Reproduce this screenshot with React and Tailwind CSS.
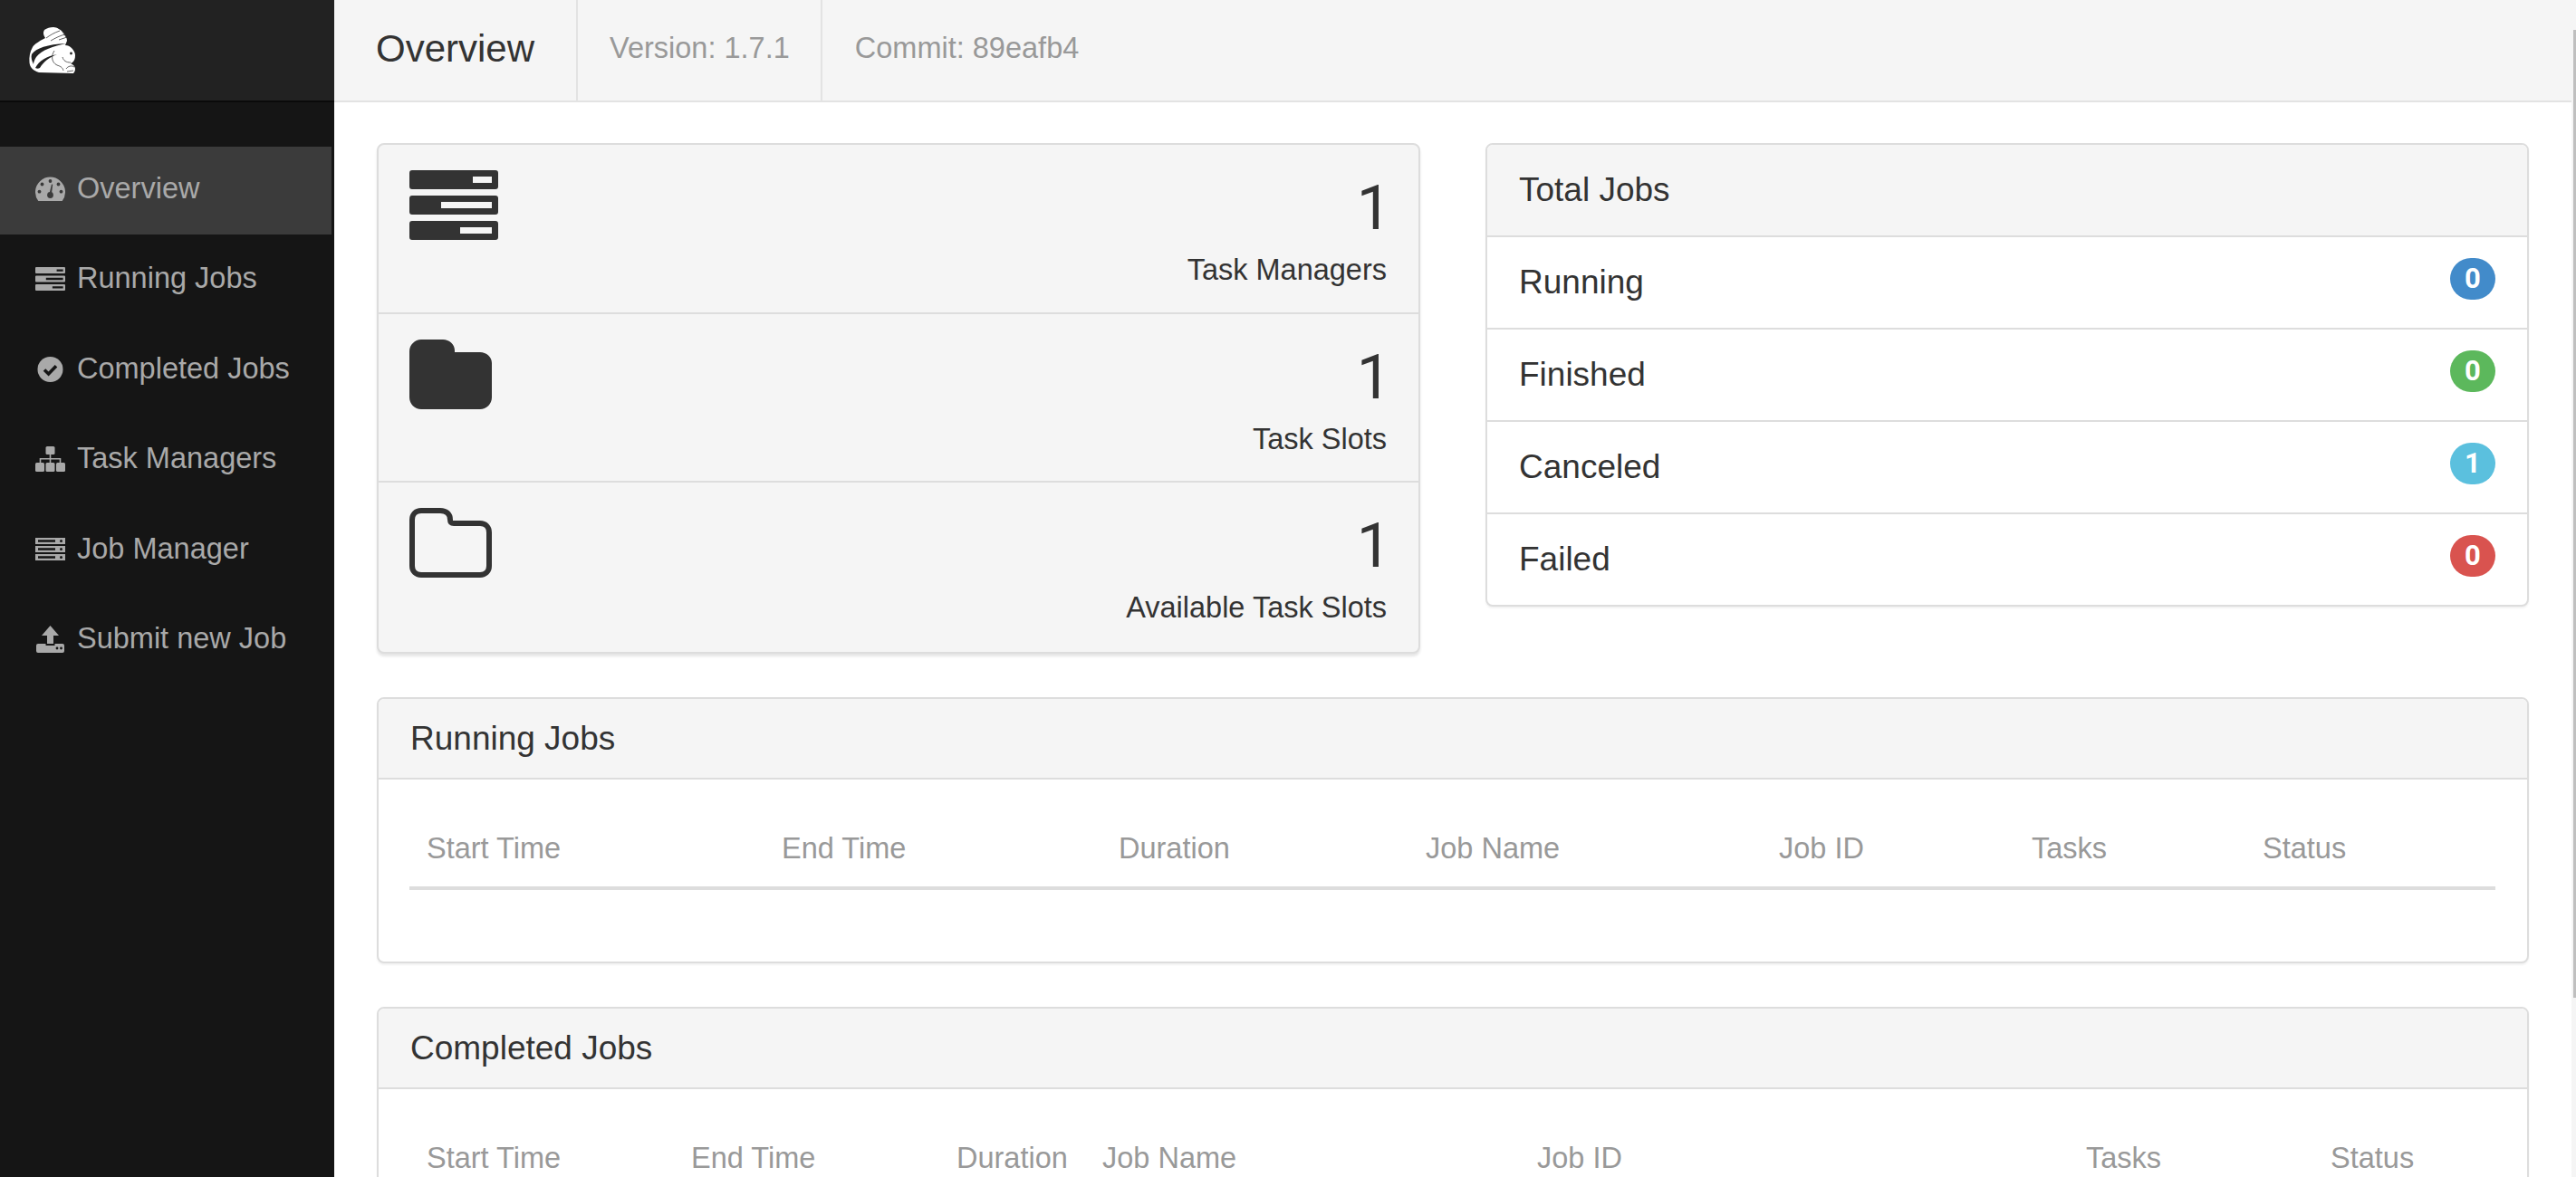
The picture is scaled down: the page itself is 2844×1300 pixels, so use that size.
import React from "react";

const font = { fontFamily: '"Liberation Sans", Arial, sans-serif' };

function TasksIcon({ className }) {
  return (
    <svg viewBox="0 0 98 77" className={className} fill="currentColor">
      <path
        fillRule="evenodd"
        d="M3 0h92a3 3 0 0 1 3 3v15a3 3 0 0 1-3 3H3a3 3 0 0 1-3-3V3a3 3 0 0 1 3-3zM70 7v7h21V7zM3 28h92a3 3 0 0 1 3 3v15a3 3 0 0 1-3 3H3a3 3 0 0 1-3-3V31a3 3 0 0 1 3-3zM35 35v7h56v-7zM3 56h92a3 3 0 0 1 3 3v15a3 3 0 0 1-3 3H3a3 3 0 0 1-3-3V59a3 3 0 0 1 3-3zM56 63v7h35v-7z"
      />
    </svg>
  );
}

function FolderClosed({ className }) {
  return (
    <svg viewBox="0 0 91 77" className={className} fill="currentColor">
      <path d="M13 0h24c7 0 13 5 13 12v2h28c7 0 13 5 13 12v38c0 7-6 13-13 13H13C6 77 0 71 0 64V13C0 6 6 0 13 0z" />
    </svg>
  );
}

function FolderOpen({ className }) {
  return (
    <svg viewBox="0 0 91 77" className={className} fill="none" stroke="currentColor" strokeWidth="6">
      <path d="M13 3h21c7 0 11 4 11 10 0 3 1 4 4 4h29c6 0 10 4 10 10v37c0 6-4 10-10 10H13C7 74 3 70 3 64V13C3 7 7 3 13 3z" />
    </svg>
  );
}

function GaugeIcon({ className }) {
  return (
    <svg viewBox="0 0 33 27" className={className}>
      <path fill="currentColor" d="M3.3 27A16.5 16.5 0 1 1 29.7 27Z" />
      <g fill="#3b3b3b">
        <circle cx="16.5" cy="5" r="1.9" />
        <circle cx="7.5" cy="8.5" r="1.9" />
        <circle cx="25.5" cy="8.5" r="1.9" />
        <circle cx="4.5" cy="16.7" r="1.9" />
        <circle cx="28.5" cy="16.7" r="1.9" />
        <circle cx="16.5" cy="20.5" r="3.4" />
        <path d="M15.2 20l2.8-11.5 1.2.3-1.4 11.5z" />
      </g>
    </svg>
  );
}

function CheckIcon({ className }) {
  return (
    <svg viewBox="0 0 29 28" className={className}>
      <circle cx="14.5" cy="14" r="14" fill="currentColor" />
      <path d="M8 14.5l4.6 4.5L21 10.2" fill="none" stroke="#151515" strokeWidth="3.6" />
    </svg>
  );
}

function SitemapIcon({ className }) {
  return (
    <svg viewBox="0 0 33 28" className={className} fill="currentColor">
      <rect x="11.5" y="0" width="10" height="9" rx="1.5" />
      <rect x="0" y="18" width="10" height="10" rx="1.5" />
      <rect x="11.5" y="18" width="10" height="10" rx="1.5" />
      <rect x="23" y="18" width="10" height="10" rx="1.5" />
      <path d="M15.7 9h1.6v4h11v5h-1.6v-3.4h-9.4V18h-1.6v-3.4H6.3V18H4.7v-5h11z" />
    </svg>
  );
}

function ServerIcon({ className }) {
  return (
    <svg viewBox="0 0 33 25" className={className} fill="currentColor">
      <path
        fillRule="evenodd"
        d="M0 0h33v7H0zM3 2.3v2.4h19V2.3zM28.5 2a1.5 1.5 0 1 0 0 3 1.5 1.5 0 0 0 0-3zM0 9h33v7H0zM3 11.3v2.4h19v-2.4zM28.5 11a1.5 1.5 0 1 0 0 3 1.5 1.5 0 0 0 0-3zM0 18h33v7H0zM3 20.3v2.4h19v-2.4zM28.5 20a1.5 1.5 0 1 0 0 3 1.5 1.5 0 0 0 0-3z"
      />
    </svg>
  );
}

function UploadIcon({ className }) {
  return (
    <svg viewBox="0 0 31 30" className={className} fill="currentColor">
      <path d="M15.5 0l9.5 11h-6v9h-7v-9H6z" />
      <path
        fillRule="evenodd"
        d="M2 20h8.5v2h10v-2H29a2 2 0 0 1 2 2v6a2 2 0 0 1-2 2H2a2 2 0 0 1-2-2v-6a2 2 0 0 1 2-2zM23 23.6a1.4 1.4 0 1 0 0 2.8 1.4 1.4 0 0 0 0-2.8zM27.5 23.6a1.4 1.4 0 1 0 0 2.8 1.4 1.4 0 0 0 0-2.8z"
      />
    </svg>
  );
}

// squirrel mark, drawn by hand
function Logo() {
  return (
    <svg viewBox="0 0 51 51" className="w-[51px] h-[51px]">
      <path
        fill="#fff"
        d="M11 50C5 48 1 45 .5 39 0 33 1 27 4 22c2-3 6-6 14-10-2-3-3-6-1-9 3-2 6-3 10-3 4 0 8 3 11 6 2 3 4 6 4 9l-2 5c3 0 5 1 7 3 2 2 4 5 4 8 0 4-1 6-3 8l-2 1c2 1 5 3 5 6 0 2-1 4-2 5z"
      />
      <g fill="#222">
        <path d="M3 30C8 23 20 19 41 18 27 21 14 25 8 33c-2 3-3 6-3 8-2-4-3-8-2-11z" />
        <path d="M7 45c4-8 13-13 24-15-8 3-15 8-19 15-2 1-3 1-5 0z" />
      </g>
      <g fill="none" stroke="#222" strokeWidth="0.7">
        <path d="M19 12c4-3 9-6 15-8" />
        <path d="M24 15c5-3 11-6 16-7" />
        <path d="M33 14l9-3" />
        <path d="M37 5l4 6" />
        <path d="M28 26c-4 6-3 13 3 16 3 1 6 2 7 6" />
        <path d="M37 33c1 4 4 6 9 6" />
        <path d="M41 46c2-3 6-4 9-2" />
        <path d="M42 49l7-1" />
      </g>
      <circle cx="46.5" cy="29" r="1.4" fill="#222" />
    </svg>
  );
}

const nav = [
  { label: "Overview", icon: GaugeIcon, size: "w-[33px] h-[27px]", active: true },
  { label: "Running Jobs", icon: TasksIcon, size: "w-[33px] h-[26px]" },
  { label: "Completed Jobs", icon: CheckIcon, size: "w-[29px] h-[28px]" },
  { label: "Task Managers", icon: SitemapIcon, size: "w-[33px] h-[28px]" },
  { label: "Job Manager", icon: ServerIcon, size: "w-[33px] h-[25px]" },
  { label: "Submit new Job", icon: UploadIcon, size: "w-[31px] h-[30px]" },
];

const stats = [
  { value: 1, label: "Task Managers", icon: TasksIcon, size: "w-[98px] h-[77px]" },
  { value: 1, label: "Task Slots", icon: FolderClosed, size: "w-[91px] h-[77px]" },
  { value: 1, label: "Available Task Slots", icon: FolderOpen, size: "w-[91px] h-[77px]" },
];

const totals = [
  { label: "Running", value: 0, color: "bg-[#428bca]" },
  { label: "Finished", value: 0, color: "bg-[#5cb85c]" },
  { label: "Canceled", value: 1, color: "bg-[#5bc0de]" },
  { label: "Failed", value: 0, color: "bg-[#d9534f]" },
];

const columns = ["Start Time", "End Time", "Duration", "Job Name", "Job ID", "Tasks", "Status"];
const runningWidths = ["w-[392px]", "w-[372px]", "w-[339px]", "w-[390px]", "w-[279px]", "w-[255px]", "w-[276px]"];
const completedWidths = ["w-[292px]", "w-[293px]", "w-[161px]", "w-[480px]", "w-[606px]", "w-[270px]", "w-[201px]"];

function Panel({ title, tall, children, className = "" }) {
  return (
    <div className={`border-2 border-[#ddd] rounded-lg bg-white shadow-[0_2px_2px_rgba(0,0,0,0.05)] overflow-hidden ${className}`}>
      <div className={`${tall ? "h-[102px]" : "h-[89px]"} bg-[#f5f5f5] border-b-2 border-[#ddd] px-[35px] flex items-center text-[37px] text-[#333]`}>
        {title}
      </div>
      {children}
    </div>
  );
}

function JobsTable({ widths }) {
  return (
    <div className="px-[34px] pt-[38px] pb-[79px]">
      <table className="table-fixed w-[2303px] border-collapse">
        <thead>
          <tr>
            {columns.map((c, i) => (
              <th
                key={c}
                className={`${widths[i]} h-[82px] pl-[19px] pb-[4px] text-left font-normal text-[32.5px] text-[#999] border-b-4 border-[#ddd]`}
              >
                {c}
              </th>
            ))}
          </tr>
        </thead>
      </table>
    </div>
  );
}

export default function App() {
  return (
    <div className="flex w-full h-[1300px] overflow-hidden bg-white" style={font}>
      {/* sidebar */}
      <aside className="w-[369px] shrink-0 bg-[#151515]">
        <div className="h-[113px] bg-[#222] border-b-2 border-[#0a0a0a] pl-[32px] pt-[30px]">
          <Logo />
        </div>
        <nav className="pt-[49px] pr-[3px]">
          {nav.map((item) => {
            const Icon = item.icon;
            return (
              <div
                key={item.label}
                className={`h-[97px] mb-[2.5px] pl-[39px] pb-[4px] flex items-center text-[32.5px] text-[#a9a9a9] ${item.active ? "bg-[#3b3b3b]" : ""}`}
              >
                <span className="w-[33px] mr-[13px] flex justify-center">
                  <Icon className={item.size} />
                </span>
                <span className="mb-[1px]">{item.label}</span>
              </div>
            );
          })}
        </nav>
      </aside>

      <div className="flex-1 min-w-0 flex flex-col">
        {/* top bar */}
        <header className="h-[113px] shrink-0 bg-[#f5f5f5] border-b-2 border-[#e3e3e3] flex items-stretch">
          <div className="pl-[46px] pr-[46px] pb-[4px] border-r-2 border-[#e3e3e3] flex items-center text-[42px] text-[#333]">
            Overview
          </div>
          <div className="pl-[35px] pr-[34px] pb-[4px] border-r-2 border-[#e3e3e3] flex items-center text-[32.5px] text-[#999]">
            Version: 1.7.1
          </div>
          <div className="pl-[36px] pb-[4px] flex items-center text-[32.5px] text-[#999]">Commit: 89eafb4</div>
        </header>

        {/* content */}
        <main className="flex-1 overflow-hidden pt-[45px] px-[47px]">
          <div className="grid grid-cols-2 gap-x-[72px] items-start mb-[48.5px]">
            <div className="border-2 border-[#ddd] rounded-lg bg-[#f5f5f5] shadow-[0_3px_3px_rgba(0,0,0,0.1)] overflow-hidden">
              {stats.map((s, i) => {
                const Icon = s.icon;
                return (
                  <div
                    key={s.label}
                    className={`h-[186.5px] pl-[34px] pr-[35px] pt-[28px] flex justify-between text-[#333] ${i < 2 ? "border-b-2 border-[#ddd]" : ""}`}
                  >
                    <Icon className={`${s.size} text-[#333]`} />
                    <div className="text-right">
                      <div className="font-['Roboto'] text-[68px] leading-[78px] pt-[3px] -mr-[5px]">{s.value}</div>
                      <div className="text-[32.5px] leading-[36px] mt-[11px]">{s.label}</div>
                    </div>
                  </div>
                );
              })}
            </div>

            <Panel title="Total Jobs" tall>
              {totals.map((t, i) => (
                <div
                  key={t.label}
                  className={`${i < 3 ? "h-[102px] border-b-2 border-[#ddd]" : "h-[100px]"} pl-[35px] pr-[35px] flex items-center justify-between text-[37px] text-[#333]`}
                >
                  <span>{t.label}</span>
                  <span className={`${t.color} w-[50px] h-[46px] mb-[8px] rounded-full flex items-center justify-center text-white font-['Roboto'] text-[31px] font-bold`}>
                    {t.value}
                  </span>
                </div>
              ))}
            </Panel>
          </div>

          <Panel title="Running Jobs" className="mb-[48px]">
            <JobsTable widths={runningWidths} />
          </Panel>

          <Panel title="Completed Jobs">
            <JobsTable widths={completedWidths} />
          </Panel>
        </main>
      </div>

      {/* scrollbar */}
      <div className="w-[5px] shrink-0 bg-[#f5f5f5] pl-[1.5px]">
        <div className="mt-[33px] h-[1069px] bg-[#bfbfbf]" />
      </div>
    </div>
  );
}
